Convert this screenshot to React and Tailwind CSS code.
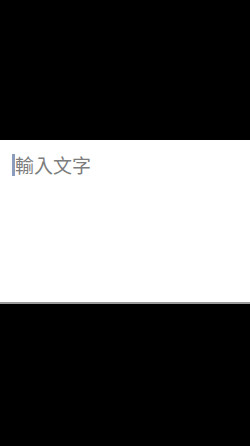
export default function App() {
  return (
    <div className="w-[250px] h-[446px] bg-black flex flex-col overflow-hidden">
      <div className="h-[140px] shrink-0" />
      <div className="h-[162px] shrink-0 bg-white pl-[12px] pt-[14px]">
        <div className="flex items-center">
          <span className="w-[3px] h-[22px] bg-[#8c9cbc]" />
          <span className="text-[19px] leading-[22px] text-[#7d7d7d] font-['Noto_Sans_CJK_TC',sans-serif]">
            輸入文字
          </span>
        </div>
      </div>
      <div className="h-[2px] shrink-0 bg-[#9a9a9a]" />
      <div className="flex-1" />
    </div>
  );
}
